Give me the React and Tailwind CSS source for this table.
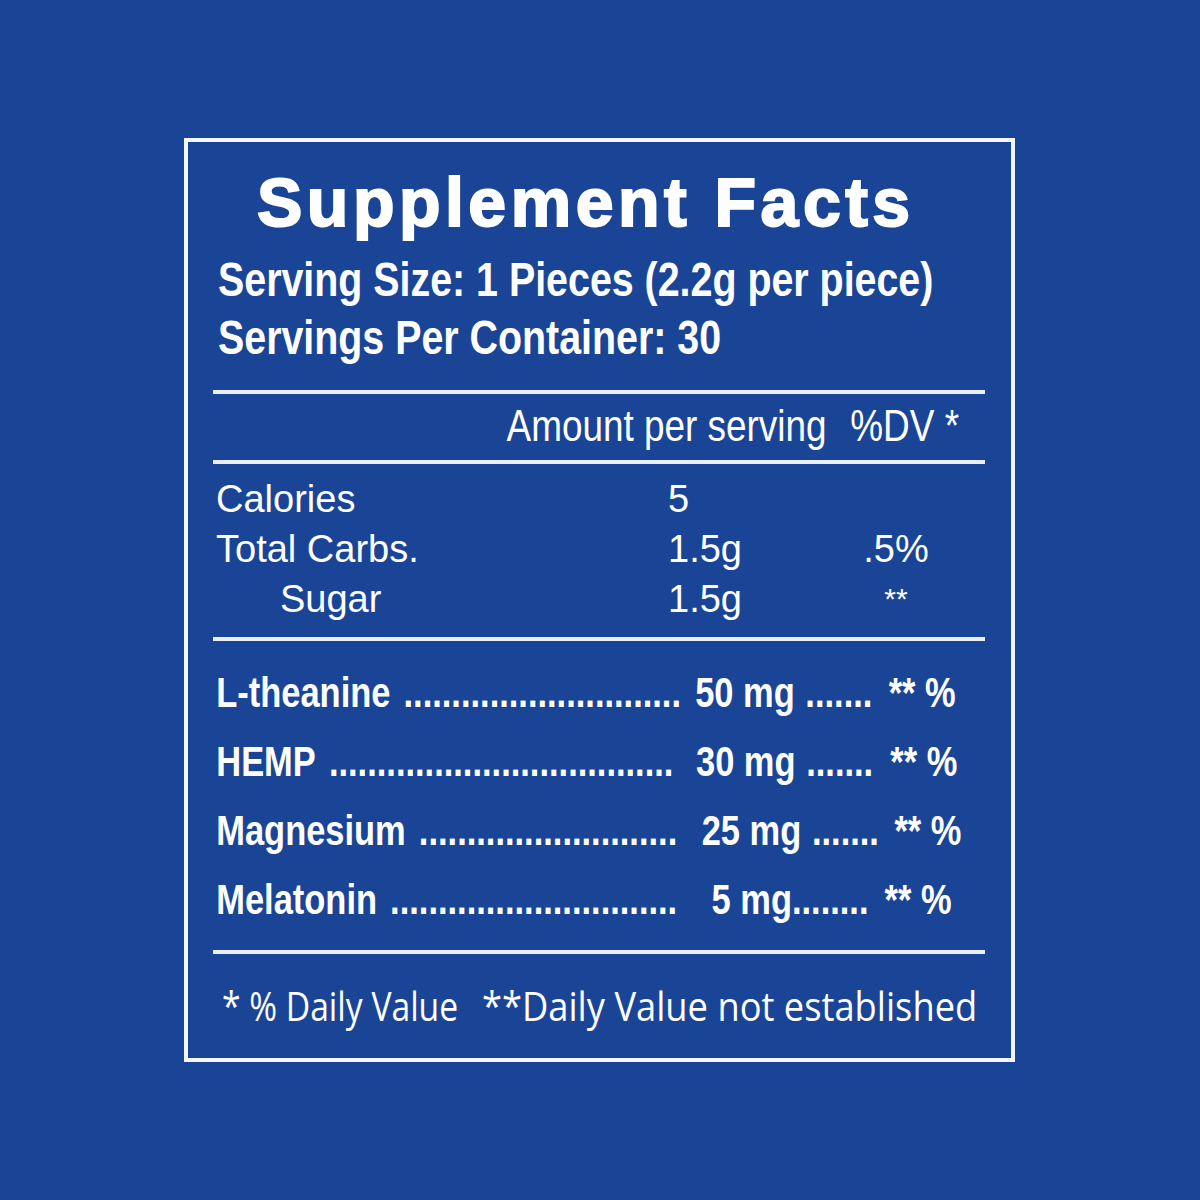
// Liberation Sans squeezed horizontally stands in for the condensed Helvetica of the label
const SANS = "font-['Liberation_Sans',sans-serif]";

const nutrients = [
  { label: 'Calories', value: '5', dv: '', indent: 'pl-[3px]' },
  { label: 'Total Carbs.', value: '1.5g', dv: '.5%', indent: 'pl-[3px]' },
  { label: 'Sugar', value: '1.5g', dv: '**', indent: 'pl-[67px]' },
];

// widths are in unscaled px (row is squeezed to 0.82 afterwards)
const ingredients = [
  { name: 'L-theanine', dots: 29, dots2: 7, amount: '50 mg', seg1: 'w-[569px]', gap1: 'ml-[15px]', seg2: 'w-[220px]', gap2: 'ml-[16px]', space: true },
  { name: 'HEMP', dots: 36, dots2: 7, amount: '30 mg', seg1: 'w-[557px]', gap1: 'ml-[28px]', seg2: 'w-[221px]', gap2: 'ml-[16px]', space: true },
  { name: 'Magnesium', dots: 27, dots2: 7, amount: '25 mg', seg1: 'w-[565px]', gap1: 'ml-[27px]', seg2: 'w-[222px]', gap2: 'ml-[13px]', space: true },
  { name: 'Melatonin', dots: 30, dots2: 8, amount: '5 mg', seg1: 'w-[566px]', gap1: 'ml-[38px]', seg2: 'w-[195px]', gap2: 'ml-[16px]', space: false },
];

function Rule({ className = '' }) {
  return <div className={`h-[4px] bg-[#e9f0fb] ${className}`} />;
}

export default function App() {
  return (
    <div className="w-[1200px] h-[1200px] bg-[#1a4597] pt-[138px] pl-[184px] text-white">
      <div className="w-[831px] h-[924px] border-4 border-[#f3f6fc] pl-[25px] pr-[26px]">
        {/* Title */}
        <h1 className={`pt-[22px] leading-[76px] text-[68px] font-bold tracking-[4.5px] pl-[44px] ${SANS} [-webkit-text-stroke:2px_white] whitespace-nowrap`}>
          Supplement Facts
        </h1>

        <div className={`mt-[11px] pl-[5px] ${SANS} font-bold text-[48px] leading-[58px] whitespace-nowrap`}>
          <div className="origin-left scale-x-[0.82]">Serving Size: 1 Pieces (2.2g per piece)</div>
          <div className="origin-left scale-x-[0.82]">Servings Per Container: 30</div>
        </div>

        <Rule className="mt-[23px]" />

        {/* column header */}
        <div className={`mt-[7px] w-[941px] flex origin-left scale-x-[0.82] ${SANS} text-[45px] leading-[50px] whitespace-nowrap`}>
          <span className="ml-[358px]">Amount per serving</span>
          <span className="ml-[29px]">%DV *</span>
        </div>

        <Rule className="mt-[9px]" />

        <div className={`mt-[10px] ${SANS} text-[38px] leading-[50px]`}>
          {nutrients.map(n => (
            <div key={n.label} className="flex">
              <div className={`w-[455px] ${n.indent}`}>{n.label}</div>
              <div className="w-[178px]">{n.value}</div>
              <div className={`w-[100px] text-center ${n.dv === '**' ? 'text-[30px]' : ''}`}>{n.dv}</div>
            </div>
          ))}
        </div>

        <Rule className="mt-[13px]" />

        {/* ingredients */}
        <div className={`mt-[17px] w-[941px] origin-left scale-x-[0.82] ${SANS} font-bold text-[42px] leading-[69px]`}>
          {ingredients.map(i => (
            <div key={i.name} className="flex pl-[4px] whitespace-nowrap">
              <div className={`flex shrink-0 ${i.seg1}`}>
                <span>{i.name}</span>
                <span className="ml-[16px]">{'.'.repeat(i.dots)}</span>
              </div>
              <div className={`flex shrink-0 ${i.gap1} ${i.seg2}`}>
                <span>{i.amount}</span>
                <span className={i.space ? 'ml-[13px]' : ''}>{'.'.repeat(i.dots2)}</span>
              </div>
              <span className={i.gap2}>** %</span>
            </div>
          ))}
        </div>

        <Rule className="mt-[16px]" />

        {/* footnote */}
        <div className="mt-[23px] pl-[9px] flex font-['Open_Sans',sans-serif] text-[41px] leading-[56px] whitespace-nowrap">
          <div className="w-[240px] shrink-0">
            <div className="origin-left scale-x-[0.82]">* % Daily Value</div>
          </div>
          <div className="ml-[20px] shrink-0">
            <div className="origin-left scale-x-[0.885]">**Daily Value not established</div>
          </div>
        </div>
      </div>
    </div>
  );
}
